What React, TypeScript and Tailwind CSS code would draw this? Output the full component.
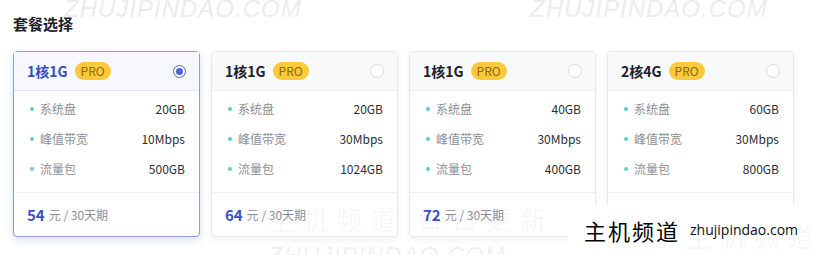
import React from 'react';

interface Plan {
  name: string;
  disk: string;
  bandwidth: string;
  traffic: string;
  price: number;
  selected?: boolean;
}

const PLANS: Plan[] = [
  { name: '1核1G', disk: '20GB', bandwidth: '10Mbps', traffic: '500GB', price: 54, selected: true },
  { name: '1核1G', disk: '20GB', bandwidth: '30Mbps', traffic: '1024GB', price: 64 },
  { name: '1核1G', disk: '40GB', bandwidth: '30Mbps', traffic: '400GB', price: 72 },
  { name: '2核4G', disk: '60GB', bandwidth: '30Mbps', traffic: '800GB', price: 80 },
];

const PlanCard: React.FC<{ plan: Plan }> = ({ plan }) => {
  const rows = [
    { label: '系统盘', value: plan.disk },
    { label: '峰值带宽', value: plan.bandwidth },
    { label: '流量包', value: plan.traffic },
  ];

  return (
    <div
      className={`w-[187px] h-[186px] shrink-0 rounded-[4px] border bg-white flex flex-col ${
        plan.selected
          ? 'border-[#8e9be6] shadow-[0_3px_8px_rgba(60,80,160,0.18)]'
          : 'border-[#e6e8ee] shadow-[0_3px_6px_rgba(0,0,0,0.06)]'
      }`}
    >
      {/* Header */}
      <div
        className={`h-[39px] shrink-0 flex items-center px-[13px] border-b ${
          plan.selected ? 'bg-[#f7f8fe] border-[#dfe3f5]' : 'bg-[#f8f9fb] border-[#eceef2]'
        }`}
      >
        <span
          className={`text-[14px] font-bold leading-none ${plan.selected ? 'text-[#3b4cc0]' : 'text-[#1d2129]'}`}
        >
          {plan.name}
        </span>
        <span className="ml-[7px] h-[18px] px-[6px] rounded-full bg-[#fcc93a] text-[#8c6a12] text-[12px] leading-[18px]">
          PRO
        </span>
        <span className="ml-auto">
          {plan.selected ? (
            <span className="w-[13px] h-[13px] rounded-full border border-[#4a63d8] flex items-center justify-center bg-white">
              <span className="w-[7px] h-[7px] rounded-full bg-[#4a63d8]" />
            </span>
          ) : (
            <span className="block w-[14px] h-[14px] rounded-full border border-[#d9dbe0] bg-white" />
          )}
        </span>
      </div>

      {/* Specs */}
      <div className="pt-[3px] pb-[8px] px-[14px] border-b border-[#eceef2]">
        {rows.map(r => (
          <div key={r.label} className="h-[30px] flex items-center text-[12px]">
            <span className="w-[4px] h-[4px] rounded-full bg-[#5fd0c0] ml-[2px] mr-[6px]" />
            <span className="text-[#8a8f99]">{r.label}</span>
            <span className="ml-auto text-[#2b2f36]">{r.value}</span>
          </div>
        ))}
      </div>

      {/* Price */}
      <div className="flex-1 flex items-center px-[13px]">
        <span className="text-[15px] font-bold text-[#3b52c4] leading-none">{plan.price}</span>
        <span className="ml-[4px] text-[12px] text-[#8a8f99] leading-none">元 / 30天期</span>
      </div>
    </div>
  );
};

export default function App() {
  return (
    <div className="relative w-[828px] h-[255px] overflow-hidden bg-white font-['Noto_Sans_CJK_SC','Noto_Sans',sans-serif]">
      <div className="pt-[13px] pl-[13px]">
        <h2 className="text-[15px] font-bold text-[#1d2129] leading-[22px]">套餐选择</h2>
        <div className="mt-[16px] flex gap-[11px]">
          {PLANS.map((p, i) => (
            <PlanCard key={i} plan={p} />
          ))}
        </div>
      </div>

      {/* Watermarks */}
      <span className="absolute left-[64px] top-[-9px] text-[24px] italic font-light text-[#ececec] font-['Liberation_Sans',sans-serif] tracking-[1px] pointer-events-none">
        ZHUJIPINDAO.COM
      </span>
      <span className="absolute left-[530px] top-[-9px] text-[24px] italic font-light text-[#ececec] font-['Liberation_Sans',sans-serif] tracking-[1px] pointer-events-none">
        ZHUJIPINDAO.COM
      </span>
      <span className="absolute left-[268px] top-[199px] text-[26px] font-normal text-black/[0.05] tracking-[8px] pointer-events-none">
        主机频道 每日更新
      </span>
      <span className="absolute left-[268px] top-[238px] text-[24px] italic font-light text-black/[0.08] font-['Liberation_Sans',sans-serif] tracking-[1px] pointer-events-none">
        ZHUJIPINDAO.COM
      </span>

      {/* Site badge overlay */}
      <div className="absolute left-[568px] top-[205px] w-[260px] h-[50px] bg-white flex items-center pl-[16px]">
        <span className="absolute left-[118px] top-[11px] text-[26px] font-normal text-black/[0.05] tracking-[8px] whitespace-nowrap pointer-events-none">
          主机频道 每日
        </span>
        <span className="relative text-[22px] text-black tracking-[2px] leading-none">主机频道</span>
        <span className="relative ml-[10px] text-[14px] text-[#111] font-['Open_Sans',sans-serif] leading-none">
          zhujipindao.com
        </span>
      </div>
    </div>
  );
}
